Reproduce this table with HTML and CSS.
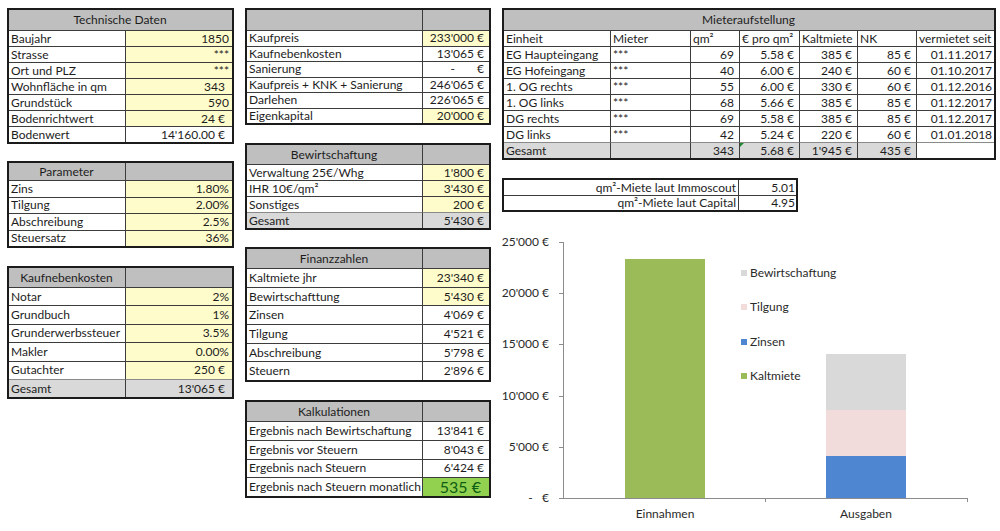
FILE: index.html
```html
<!DOCTYPE html>
<html lang="de">
<head>
<meta charset="utf-8">
<title>Immobilienkalkulation</title>
<link rel="stylesheet" href="styles.css">
</head>
<body>
<div class="sheet">
  <div class="col col-left">
    <table class="t t-tech">
      <colgroup><col class="w116"><col class="w107"></colgroup>
      <tr class="hd"><th colspan="2" class="merged">Technische Daten</th></tr>
      <tr><td>Baujahr</td><td class="num y">1850</td></tr>
      <tr><td>Strasse</td><td class="num y">***</td></tr>
      <tr><td>Ort und PLZ</td><td class="num y">***</td></tr>
      <tr><td>Wohnfläche in qm</td><td class="num y pr">343</td></tr>
      <tr><td>Grundstück</td><td class="num y">590</td></tr>
      <tr><td>Bodenrichtwert</td><td class="num y pr">24 €</td></tr>
      <tr><td>Bodenwert</td><td class="num pr">14'160.00 €</td></tr>
    </table>

    <table class="t t-param">
      <colgroup><col class="w116"><col class="w107"></colgroup>
      <tr class="hd"><th>Parameter</th><th></th></tr>
      <tr><td>Zins</td><td class="num y">1.80%</td></tr>
      <tr><td>Tilgung</td><td class="num y">2.00%</td></tr>
      <tr><td>Abschreibung</td><td class="num y">2.5%</td></tr>
      <tr><td>Steuersatz</td><td class="num y">36%</td></tr>
    </table>

    <table class="t t-knk">
      <colgroup><col class="w116"><col class="w107"></colgroup>
      <tr class="hd"><th>Kaufnebenkosten</th><th></th></tr>
      <tr><td>Notar</td><td class="num y">2%</td></tr>
      <tr><td>Grundbuch</td><td class="num y">1%</td></tr>
      <tr><td>Grunderwerbssteuer</td><td class="num y">3.5%</td></tr>
      <tr><td>Makler</td><td class="num y">0.00%</td></tr>
      <tr><td>Gutachter</td><td class="num y pr">250 €</td></tr>
      <tr class="tot"><td>Gesamt</td><td class="num pr">13'065 €</td></tr>
    </table>
  </div>

  <div class="col col-mid">
    <table class="t t-kauf">
      <colgroup><col class="w175"><col class="w67"></colgroup>
      <tr class="hd"><th></th><th></th></tr>
      <tr><td>Kaufpreis</td><td class="num y">233'000 €</td></tr>
      <tr><td>Kaufnebenkosten</td><td class="num">13'065 €</td></tr>
      <tr><td>Sanierung</td><td class="num"><span class="dash">-</span>€</td></tr>
      <tr><td>Kaufpreis + KNK + Sanierung</td><td class="num">246'065 €</td></tr>
      <tr><td>Darlehen</td><td class="num">226'065 €</td></tr>
      <tr><td>Eigenkapital</td><td class="num y">20'000 €</td></tr>
    </table>

    <table class="t t-bew">
      <colgroup><col class="w175"><col class="w67"></colgroup>
      <tr class="hd"><th>Bewirtschaftung</th><th></th></tr>
      <tr><td>Verwaltung 25€/Whg</td><td class="num y">1'800 €</td></tr>
      <tr><td>IHR 10€/qm²</td><td class="num y">3'430 €</td></tr>
      <tr><td>Sonstiges</td><td class="num y">200 €</td></tr>
      <tr class="tot"><td>Gesamt</td><td class="num">5'430 €</td></tr>
    </table>

    <table class="t t-fin">
      <colgroup><col class="w175"><col class="w67"></colgroup>
      <tr class="hd"><th>Finanzzahlen</th><th></th></tr>
      <tr><td>Kaltmiete jhr</td><td class="num y">23'340 €</td></tr>
      <tr><td>Bewirtschafttung</td><td class="num y">5'430 €</td></tr>
      <tr><td>Zinsen</td><td class="num">4'069 €</td></tr>
      <tr><td>Tilgung</td><td class="num">4'521 €</td></tr>
      <tr><td>Abschreibung</td><td class="num">5'798 €</td></tr>
      <tr><td>Steuern</td><td class="num">2'896 €</td></tr>
    </table>

    <table class="t t-kalk">
      <colgroup><col class="w175"><col class="w67"></colgroup>
      <tr class="hd"><th>Kalkulationen</th><th></th></tr>
      <tr><td>Ergebnis nach Bewirtschaftung</td><td class="num">13'841 €</td></tr>
      <tr><td>Ergebnis vor Steuern</td><td class="num">8'043 €</td></tr>
      <tr><td>Ergebnis nach Steuern</td><td class="num">6'424 €</td></tr>
      <tr><td>Ergebnis nach Steuern monatlich</td><td class="num big">535 €</td></tr>
    </table>
  </div>

  <div class="col col-right">
    <table class="t t-mieter">
      <colgroup><col class="m1"><col class="m2"><col class="m3"><col class="m4"><col class="m5"><col class="m6"><col class="m7"></colgroup>
      <tr class="hd"><th colspan="7" class="merged">Mieteraufstellung</th></tr>
      <tr><td>Einheit</td><td>Mieter</td><td>qm²</td><td>€ pro qm²</td><td>Kaltmiete</td><td>NK</td><td>vermietet seit</td></tr>
      <tr><td>EG Haupteingang</td><td>***</td><td class="num">69</td><td class="num">5.58 €</td><td class="num">385 €</td><td class="num">85 €</td><td class="num">01.11.2017</td></tr>
      <tr><td>EG Hofeingang</td><td>***</td><td class="num">40</td><td class="num">6.00 €</td><td class="num">240 €</td><td class="num">60 €</td><td class="num">01.10.2017</td></tr>
      <tr><td>1. OG rechts</td><td>***</td><td class="num">55</td><td class="num">6.00 €</td><td class="num">330 €</td><td class="num">60 €</td><td class="num">01.12.2016</td></tr>
      <tr><td>1. OG links</td><td>***</td><td class="num">68</td><td class="num">5.66 €</td><td class="num">385 €</td><td class="num">85 €</td><td class="num">01.12.2017</td></tr>
      <tr><td>DG rechts</td><td>***</td><td class="num">69</td><td class="num">5.58 €</td><td class="num">385 €</td><td class="num">85 €</td><td class="num">01.12.2017</td></tr>
      <tr><td>DG links</td><td>***</td><td class="num">42</td><td class="num">5.24 €</td><td class="num">220 €</td><td class="num">60 €</td><td class="num">01.01.2018</td></tr>
      <tr class="tot"><td>Gesamt</td><td></td><td class="num">343</td><td class="num flag">5.68 €</td><td class="num">1'945 €</td><td class="num">435 €</td><td class="blank"></td></tr>
    </table>

    <table class="t t-qm">
      <colgroup><col class="q1"><col class="q2"></colgroup>
      <tr><td class="num">qm²-Miete laut Immoscout</td><td class="num tight">5.01</td></tr>
      <tr><td class="num">qm²-Miete laut Capital</td><td class="num tight">4.95</td></tr>
    </table>

    <svg class="chart" width="490" height="301" viewBox="0 0 490 301">
      <g class="ylab">
        <text x="49" y="16">25'000 €</text>
        <text x="49" y="67">20'000 €</text>
        <text x="49" y="118">15'000 €</text>
        <text x="49" y="170">10'000 €</text>
        <text x="49" y="221">5'000 €</text>
        <text x="49" y="272">-&#160;&#160;&#160;€</text>
      </g>
      <g class="axis">
        <line x1="63.5" y1="12" x2="63.5" y2="268"/>
        <line x1="59" y1="12.5" x2="63.5" y2="12.5"/>
        <line x1="59" y1="63.5" x2="63.5" y2="63.5"/>
        <line x1="59" y1="114.5" x2="63.5" y2="114.5"/>
        <line x1="59" y1="166.5" x2="63.5" y2="166.5"/>
        <line x1="59" y1="217.5" x2="63.5" y2="217.5"/>
        <line x1="59" y1="268.5" x2="467" y2="268.5"/>
        <line x1="265.5" y1="268" x2="265.5" y2="272"/>
        <line x1="467.5" y1="268" x2="467.5" y2="272"/>
      </g>
      <rect class="s-kalt" x="125" y="29" width="80" height="239"/>
      <rect class="s-zins" x="326" y="226" width="80" height="42"/>
      <rect class="s-tilg" x="326" y="180" width="80" height="46"/>
      <rect class="s-bew" x="326" y="124" width="80" height="56"/>
      <g class="xlab">
        <text x="165" y="288">Einnahmen</text>
        <text x="366" y="288">Ausgaben</text>
      </g>
      <g class="legend">
        <rect class="s-bew" x="241" y="40" width="6" height="6"/>
        <text x="250" y="47">Bewirtschaftung</text>
        <rect class="s-tilg" x="241" y="74" width="6" height="6"/>
        <text x="250" y="81">Tilgung</text>
        <rect class="s-zins" x="241" y="109" width="6" height="6"/>
        <text x="250" y="116">Zinsen</text>
        <rect class="s-kalt" x="241" y="143" width="6" height="6"/>
        <text x="250" y="150">Kaltmiete</text>
      </g>
    </svg>
  </div>
</div>
</body>
</html>
```

FILE: styles.css
```css
html, body {
  margin: 0;
  padding: 0;
  background: #ffffff;
}

body {
  font-family: Lato, "Liberation Sans", sans-serif;
  font-size: 12px;
  color: #1d1d1d;
  overflow: hidden;
}

.sheet {
  display: flex;
  align-items: flex-start;
  gap: 15px;
  padding: 8px 0 0 7px;
}

.col {
  display: flex;
  flex-direction: column;
}

.col-left { width: 223px; }
.col-mid { width: 242px; }
.col-right { width: 490px; }

/* ---------- generic sheet tables ---------- */
.t {
  border-collapse: separate;
  border-spacing: 0;
  table-layout: fixed;
  border: 2px solid #1b1b1b;
  background: #ffffff;
}

.t th,
.t td {
  padding: 0 3px 0 2px;
  border-top: 1px solid #3c3c3c;
  border-left: 1px solid #3c3c3c;
  white-space: nowrap;
  overflow: hidden;
  text-align: left;
  font-weight: normal;
  line-height: 14px;
}

.t tr:first-child th,
.t tr:first-child td { border-top: none; }
.t th:first-child,
.t td:first-child { border-left: none; }

.t .hd th {
  background: #bfbfbf;
  text-align: center;
}

.t .hd th.merged { text-align: center; }

.t .num { text-align: right; }
.t .pr { padding-right: 7px; }
.t .y { background: #fffccc; }
.t .tot td { background: #d9d9d9; border-top-color: #8a8a8a; }
.t .tight { padding-right: 1px; }

.dash { padding-right: 22px; }

.w116 { width: 116px; }
.w107 { width: 107px; }
.w175 { width: 175px; }
.w67 { width: 67px; }

/* ---------- left column ---------- */
.t-tech { width: 223px; }
.t-tech .hd { height: 20px; }
.t-tech tr { height: 16px; }

.t-param { width: 223px; margin-top: 17px; }
.t-param .hd { height: 17px; }
.t-param tr { height: 16.5px; }

.t-knk { width: 223px; margin-top: 18px; }
.t-knk .hd { height: 19px; }
.t-knk tr { height: 18.4px; }

/* ---------- middle column ---------- */
.col-mid .t { width: 242px; }
.col-mid .t td:last-child { padding-right: 5px; }

.t-kauf .hd { height: 20px; }
.t-kauf tr { height: 15.5px; }

.t-bew { margin-top: 18px; }
.t-bew .hd { height: 19px; }
.t-bew tr { height: 16px; }

.t-fin { margin-top: 17px; }
.t-fin .hd { height: 19px; }
.t-fin tr { height: 18.7px; }

.t-kalk { margin-top: 18px; }
.t-kalk .hd { height: 19px; }
.t-kalk tr { height: 18.7px; }

.t .big {
  background: #92d050;
  color: #0d5e12;
  font-size: 16px;
  padding-right: 8px !important;
}

/* ---------- right column ---------- */
.t-mieter { width: 490px; }
.t-mieter .hd { height: 20px; }
.t-mieter tr { height: 16px; }
.t-mieter td.num { padding-right: 5px; }
.t-mieter td:last-child.num { padding-right: 2px; }
.t-mieter .tot td.blank { background: #ffffff; }

.flag { position: relative; }
.flag::before {
  content: "";
  position: absolute;
  left: 0;
  top: 0;
  border-top: 4px solid #1e8a2e;
  border-right: 4px solid transparent;
}

.m1 { width: 106px; }
.m2 { width: 80px; }
.m3 { width: 49px; }
.m4 { width: 60px; }
.m5 { width: 58px; }
.m6 { width: 59px; }
.m7 { width: 78px; }

.t-qm { width: 292px; margin-top: 18px; }
.t-qm tr { height: 15px; }
.q1 { width: 234px; }
.q2 { width: 58px; }
.t-qm td:first-child { padding-right: 2px; }

/* ---------- chart ---------- */
.chart {
  display: block;
  margin-top: 18px;
  margin-left: -2px;
  overflow: visible;
  font-family: Lato, "Liberation Sans", sans-serif;
  font-size: 12px;
}

.chart text { fill: #2a2a2a; }
.ylab text { text-anchor: end; }
.xlab text { text-anchor: middle; }

.axis line {
  stroke: #8c8c8c;
  stroke-width: 1;
}

.s-kalt { fill: #9bbb59; }
.s-zins { fill: #4f86d1; }
.s-tilg { fill: #f2dcdb; }
.s-bew { fill: #d9d9d9; }
```
